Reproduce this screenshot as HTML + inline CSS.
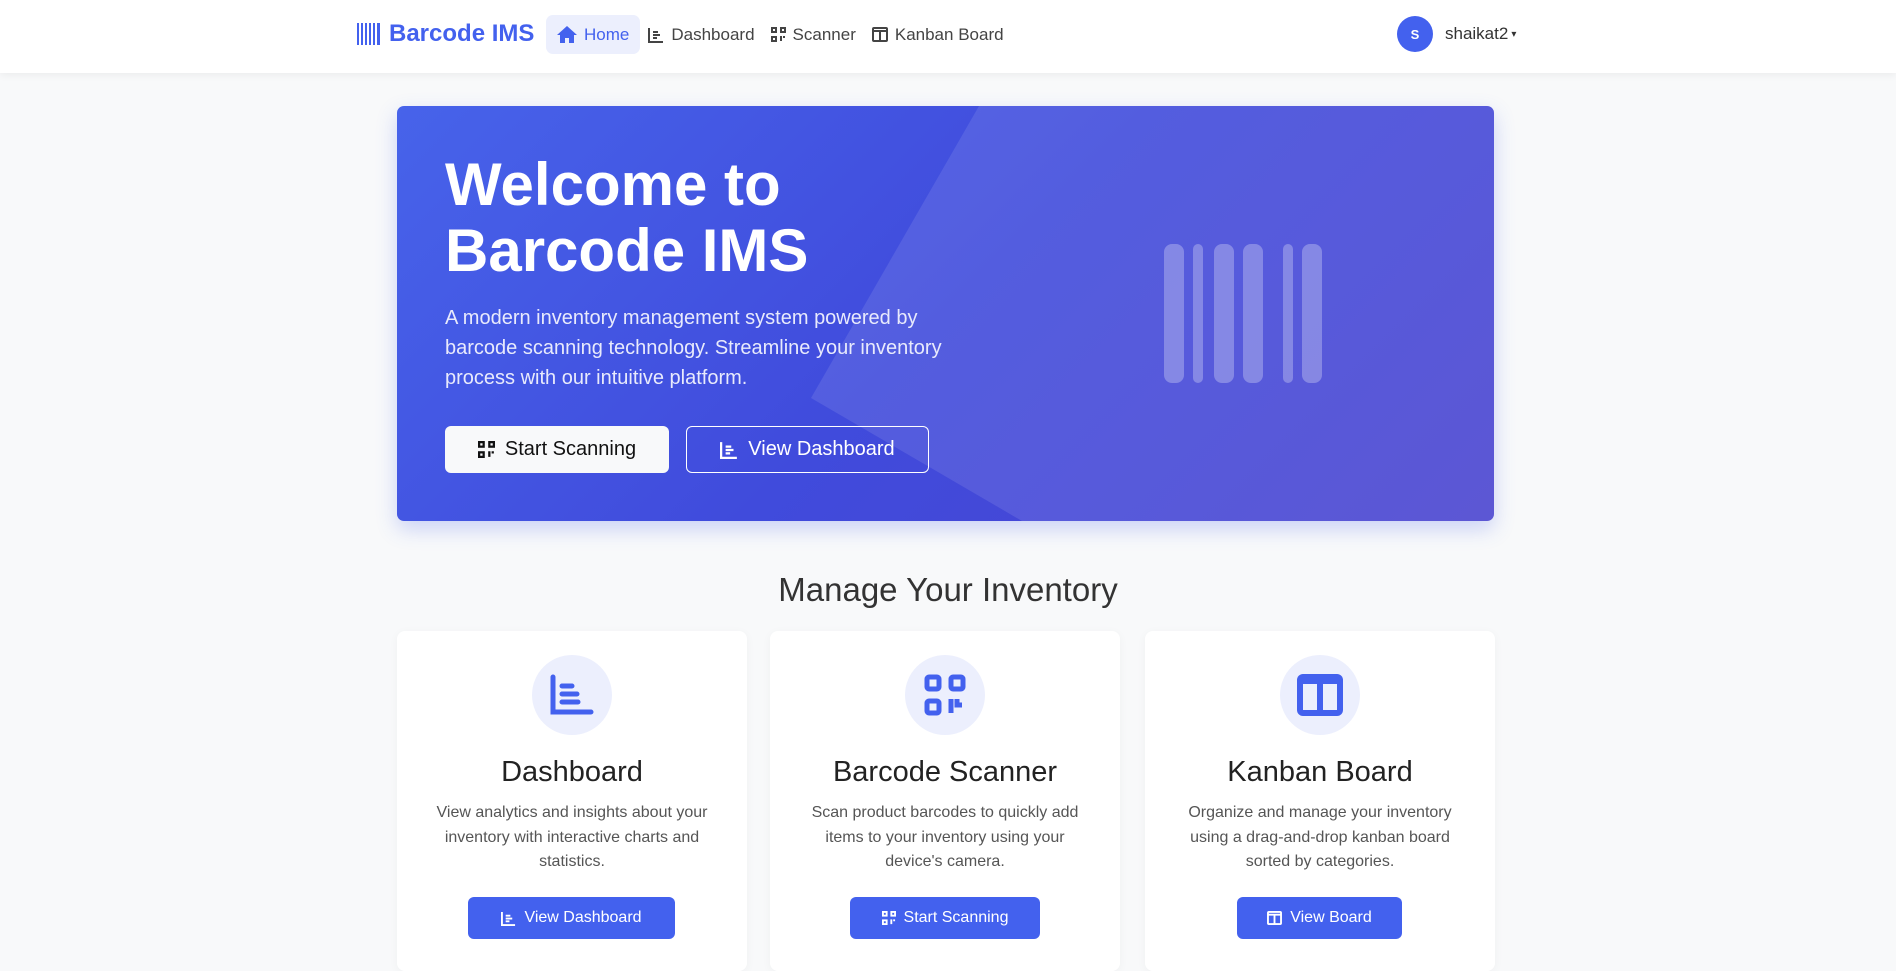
<!DOCTYPE html>
<html><head><meta charset="utf-8"><style>
*{box-sizing:border-box;margin:0;padding:0}
body{width:1896px;height:952px;overflow:hidden;background:#f8f9fa;font-family:"Liberation Sans",sans-serif;color:#212529}
.nav{position:absolute;left:0;top:0;width:1896px;height:73px;background:#fff;box-shadow:0 2px 8px rgba(0,0,0,.06)}
.brand{position:absolute;left:357px;top:20px;font-size:24px;font-weight:bold;color:#4361ee;display:flex;align-items:center;gap:8px}
.links{position:absolute;left:546px;top:15px;display:flex;align-items:center}
.links a{display:flex;align-items:center;gap:7px;height:39px;padding:0 8px;font-size:17px;color:#444;text-decoration:none}
.links a.act{background:#eceffd;color:#4361ee;border-radius:7px;padding:0 11px}
.user{position:absolute;left:1397px;top:16px;display:flex;align-items:center;gap:12px;font-size:17px;color:#333}
.av{width:36px;height:36px;border-radius:50%;background:#4361ee;color:#fff;font-size:13px;font-weight:bold;display:flex;align-items:center;justify-content:center}
.hero{position:absolute;left:397px;top:106px;width:1097px;height:415px;border-radius:7px;overflow:hidden;background:linear-gradient(135deg,#4763ea 0%,#404bdc 50%,#4a44d0 100%);box-shadow:0 8px 20px rgba(67,97,238,.25)}
.hero h1{position:absolute;left:48px;top:46px;font-size:60px;line-height:66px;color:#fff;font-weight:bold}
.hero p{position:absolute;left:48px;top:197px;width:550px;font-size:20px;line-height:30px;color:#e8eafc}
.btn1{position:absolute;left:48px;top:320px;width:224px;height:47px;background:#f8f9fa;border-radius:6px;font-size:20px;color:#111;display:flex;align-items:center;justify-content:center;gap:10px}
.btn2{position:absolute;left:289px;top:320px;width:243px;height:47px;border:1.5px solid #fff;border-radius:6px;font-size:20px;color:#fff;display:flex;align-items:center;justify-content:center;gap:10px}
h2{position:absolute;left:0;width:1896px;top:571px;text-align:center;font-size:33px;font-weight:normal;color:#333}
.card{position:absolute;top:631px;width:350px;height:340px;background:#fff;border-radius:8px;box-shadow:0 2px 10px rgba(0,0,0,.04);text-align:center}
.circ{position:absolute;left:135px;top:24px;width:80px;height:80px;border-radius:50%;background:#eceffd;display:flex;align-items:center;justify-content:center}
.card h3{position:absolute;top:125px;width:100%;font-size:29px;font-weight:normal;color:#222}
.card p{position:absolute;top:170px;left:28px;right:28px;font-size:16px;line-height:24.5px;color:#555}
.cb{position:absolute;top:266px;height:42px;background:#4361ee;border-radius:6px;color:#fff;font-size:16px;display:flex;align-items:center;justify-content:center;gap:8px}
</style></head><body>
<div class="nav">
 <div class="brand"><svg width="24" height="22" viewBox="0 0 24 22"><g fill="#4361ee"><rect x="0" y="0" width="2" height="22"/><rect x="4" y="0" width="2" height="22"/><rect x="8" y="0" width="2" height="22"/><rect x="12" y="0" width="2" height="22"/><rect x="16" y="0" width="2" height="22"/><rect x="20" y="0" width="3" height="22"/></g></svg>Barcode IMS</div>
 <div class="links">
  <a class="act"><svg width="20" height="17" viewBox="0 0 20 17"><path d="M10 0L0 9h3v8h5v-5h4v5h5V9h3z" fill="#4361ee"/></svg>Home</a>
  <a><svg width="16" height="16" viewBox="0 0 16 16" fill="none" stroke="#444" stroke-width="2"><path d="M1 1v14h14"/><path d="M5 5h5M5 8h7M5 11h4"/></svg>Dashboard</a>
  <a><svg width="15" height="15" viewBox="0 0 15 15" fill="none" stroke="#444" stroke-width="2"><rect x="1" y="1" width="4" height="4"/><rect x="10" y="1" width="4" height="4"/><rect x="1" y="10" width="4" height="4"/><path d="M10 9v5M13 9v2"/></svg>Scanner</a>
  <a><svg width="16" height="15" viewBox="0 0 16 15" fill="none" stroke="#444" stroke-width="2"><rect x="1" y="1" width="14" height="13" rx="1"/><path d="M8 4v10M1 4h14"/></svg>Kanban Board</a>
 </div>
 <div class="user"><div class="av">S</div>shaikat2 <span style="font-size:10px;margin-left:-9px">▾</span></div>
</div>
<div class="hero">
 <svg style="position:absolute;left:0;top:0" width="1097" height="415"><polygon points="582,0 1097,0 1097,415 625,415 414,292" fill="rgba(255,255,255,0.1)"/>
 <g fill="rgba(255,255,255,0.28)"><rect x="767" y="138" width="20" height="139" rx="8"/><rect x="796" y="138" width="10" height="139" rx="5"/><rect x="817" y="138" width="20" height="139" rx="8"/><rect x="846" y="138" width="20" height="139" rx="8"/><rect x="886" y="138" width="10" height="139" rx="5"/><rect x="905" y="138" width="20" height="139" rx="8"/></g></svg>
 <h1>Welcome to<br>Barcode IMS</h1>
 <p>A modern inventory management system powered by barcode scanning technology. Streamline your inventory process with our intuitive platform.</p>
 <div class="btn1"><svg width="17" height="17" viewBox="0 0 15 15" fill="none" stroke="#111" stroke-width="2"><rect x="1" y="1" width="4" height="4"/><rect x="10" y="1" width="4" height="4"/><rect x="1" y="10" width="4" height="4"/><path d="M10 9v5M13 9v2"/></svg>Start Scanning</div>
 <div class="btn2"><svg width="18" height="18" viewBox="0 0 16 16" fill="none" stroke="#fff" stroke-width="2"><path d="M1 1v14h14"/><path d="M5 5h5M5 8h7M5 11h4"/></svg>View Dashboard</div>
</div>
<h2>Manage Your Inventory</h2>
<div class="card" style="left:397px"><div class="circ"><svg width="46" height="42" viewBox="0 0 46 42" fill="none" stroke="#4361ee" stroke-width="5" stroke-linecap="round"><path d="M4 3v35h38"/><path d="M13 12h10M13 20h15M13 28h16"/></svg></div><h3>Dashboard</h3><p>View analytics and insights about your inventory with interactive charts and statistics.</p><div class="cb" style="left:71px;width:207px"><svg width="15" height="15" viewBox="0 0 16 16" fill="none" stroke="#fff" stroke-width="2"><path d="M1 1v14h14"/><path d="M5 5h5M5 8h7M5 11h4"/></svg>View Dashboard</div></div>
<div class="card" style="left:770px"><div class="circ"><svg width="42" height="42" viewBox="0 0 42 42" fill="none" stroke="#4361ee" stroke-width="5"><rect x="3" y="3" width="12" height="12" rx="2"/><rect x="27" y="3" width="12" height="12" rx="2"/><rect x="3" y="27" width="12" height="12" rx="2"/><path d="M27 25v14M33 25v6h5"/></svg></div><h3>Barcode Scanner</h3><p>Scan product barcodes to quickly add items to your inventory using your device's camera.</p><div class="cb" style="left:80px;width:190px"><svg width="14" height="14" viewBox="0 0 15 15" fill="none" stroke="#fff" stroke-width="2"><rect x="1" y="1" width="4" height="4"/><rect x="10" y="1" width="4" height="4"/><rect x="1" y="10" width="4" height="4"/><path d="M10 9v5M13 9v2"/></svg>Start Scanning</div></div>
<div class="card" style="left:1145px"><div class="circ"><svg width="46" height="42" viewBox="0 0 46 42"><rect x="0" y="0" width="46" height="42" rx="6" fill="#4361ee"/><rect x="6" y="10" width="14" height="26" fill="#eceffd"/><rect x="26" y="10" width="14" height="26" fill="#eceffd"/></svg></div><h3>Kanban Board</h3><p>Organize and manage your inventory using a drag-and-drop kanban board sorted by categories.</p><div class="cb" style="left:92px;width:165px"><svg width="15" height="14" viewBox="0 0 16 15" fill="none" stroke="#fff" stroke-width="2"><rect x="1" y="1" width="14" height="13" rx="1"/><path d="M8 4v10M1 4h14"/></svg>View Board</div></div>
</body></html>
